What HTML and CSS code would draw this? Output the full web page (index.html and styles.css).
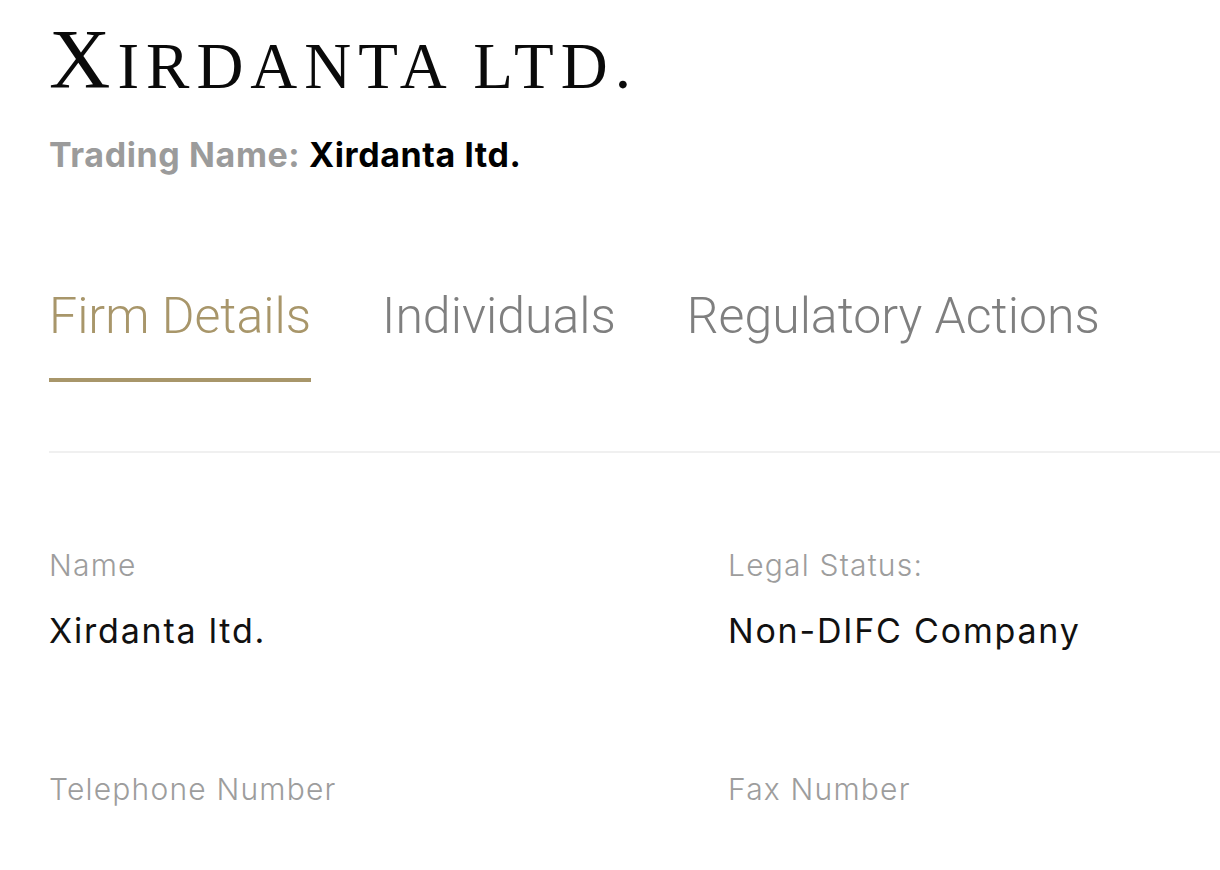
FILE: index.html
```html
<!DOCTYPE html>
<html lang="en">
<head>
<meta charset="utf-8">
<title>Xirdanta ltd.</title>
<link rel="stylesheet" href="styles.css">
</head>
<body>
<main class="page">
  <header class="firm-header">
    <h1 class="firm-title"><span class="firm-initial">X</span>irdanta ltd.</h1>
    <p class="trading"><span class="trading-label">Trading Name:</span> <span class="trading-value">Xirdanta ltd.</span></p>
  </header>
  <nav class="tabs">
    <a class="tab tab-active">Firm Details</a>
    <a class="tab">Individuals</a>
    <a class="tab">Regulatory Actions</a>
  </nav>
  <div class="divider"></div>
  <section class="fields">
    <div class="field">
      <div class="field-label">Name</div>
      <div class="field-value">Xirdanta ltd.</div>
    </div>
    <div class="field">
      <div class="field-label">Legal Status:</div>
      <div class="field-value">Non-DIFC Company</div>
    </div>
    <div class="field">
      <div class="field-label">Telephone Number</div>
      <div class="field-value"></div>
    </div>
    <div class="field">
      <div class="field-label">Fax Number</div>
      <div class="field-value"></div>
    </div>
  </section>
</main>
</body>
</html>
```

FILE: styles.css
```css
html, body {
  margin: 0;
  padding: 0;
  background: #ffffff;
}

body {
  font-family: Inter, Roboto, "Liberation Sans", sans-serif;
  color: #111111;
  overflow: hidden;
}

.page {
  padding: 17px 0 0 49px;
}

.firm-title {
  margin: 0;
  font-family: "Liberation Serif", serif;
  font-weight: 400;
  font-size: 65px;
  line-height: 84px;
  text-transform: uppercase;
  letter-spacing: 7px;
  color: #0a0a0a;
}

.firm-initial {
  font-size: 85px;
  line-height: 84px;
}

.trading {
  margin: 27px 0 0;
  font-size: 34px;
  line-height: 40px;
  font-weight: 700;
  letter-spacing: 0.6px;
}

.trading-label {
  color: #9b9b9b;
}

.trading-value {
  color: #000000;
}

.tabs {
  display: flex;
  gap: 71px;
  margin-top: 111px;
}

.tab {
  font-family: Roboto, "Liberation Sans", sans-serif;
  font-size: 50px;
  line-height: 60px;
  font-weight: 300;
  color: #7f7f7f;
  padding-bottom: 32px;
  border-bottom: 4px solid transparent;
}

.tab-active {
  color: #a8966a;
  border-bottom-color: #a8966a;
}

.divider {
  height: 2px;
  background: #f0f0f0;
  margin-top: 69px;
}

.fields {
  display: grid;
  grid-template-columns: 679px 1fr;
  row-gap: 119px;
  margin-top: 94px;
}

.field-label {
  font-size: 30px;
  line-height: 36px;
  font-weight: 300;
  letter-spacing: 1.2px;
  color: #9d9d9d;
}

.field-value {
  margin-top: 27px;
  font-size: 34px;
  line-height: 42px;
  font-weight: 400;
  letter-spacing: 1.8px;
  color: #111111;
  min-height: 42px;
}
```
